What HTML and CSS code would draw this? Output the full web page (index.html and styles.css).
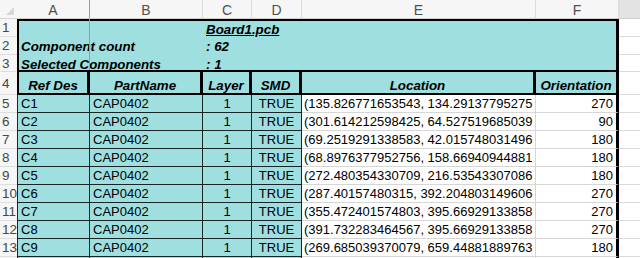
FILE: index.html
```html
<!DOCTYPE html>
<html>
<head>
<meta charset="utf-8">
<link rel="stylesheet" href="styles.css">
</head>
<body>
<div class="sheet">
  <div class="block"></div>
  <div class="resize-line"></div>
  <div class="tt title">Board1.pcb</div>
  <div class="tt lbl r2">Component count</div>
  <div class="tt val r2">: 62</div>
  <div class="tt lbl r3">Selected Components</div>
  <div class="tt val r3">: 1</div>

  <div class="corner"><svg width="17" height="19" viewBox="0 0 17 19"><polygon points="14,7 14,15 6,15" fill="#d6d6d6"/></svg></div>
  <div class="ch sep">A</div><div class="ch">B</div><div class="ch">C</div><div class="ch">D</div><div class="ch">E</div><div class="ch">F</div><div class="ch g"></div>

  <div class="rh">1</div><div class="gc"></div>
  <div class="rh">2</div><div class="gc"></div>
  <div class="rh">3</div><div class="gc"></div>

  <div class="rh">4</div>
  <div class="hd first">Ref Des</div><div class="hd">PartName</div><div class="hd">Layer</div><div class="hd">SMD</div><div class="hd">Location</div><div class="hd">Orientation</div><div class="gc"></div>

  <div class="rh">5</div><div class="c a">C1</div><div class="c">CAP0402</div><div class="c ctr">1</div><div class="c ctr">TRUE</div><div class="e">(135.826771653543, 134.29137795275</div><div class="f">270</div><div class="gc"></div>
  <div class="rh">6</div><div class="c a">C2</div><div class="c">CAP0402</div><div class="c ctr">1</div><div class="c ctr">TRUE</div><div class="e">(301.614212598425, 64.527519685039</div><div class="f">90</div><div class="gc"></div>
  <div class="rh">7</div><div class="c a">C3</div><div class="c">CAP0402</div><div class="c ctr">1</div><div class="c ctr">TRUE</div><div class="e">(69.2519291338583, 42.015748031496</div><div class="f">180</div><div class="gc"></div>
  <div class="rh">8</div><div class="c a">C4</div><div class="c">CAP0402</div><div class="c ctr">1</div><div class="c ctr">TRUE</div><div class="e">(68.8976377952756, 158.66940944881</div><div class="f">180</div><div class="gc"></div>
  <div class="rh">9</div><div class="c a">C5</div><div class="c">CAP0402</div><div class="c ctr">1</div><div class="c ctr">TRUE</div><div class="e">(272.480354330709, 216.53543307086</div><div class="f">180</div><div class="gc"></div>
  <div class="rh">10</div><div class="c a">C6</div><div class="c">CAP0402</div><div class="c ctr">1</div><div class="c ctr">TRUE</div><div class="e">(287.40157480315, 392.204803149606</div><div class="f">270</div><div class="gc"></div>
  <div class="rh">11</div><div class="c a">C7</div><div class="c">CAP0402</div><div class="c ctr">1</div><div class="c ctr">TRUE</div><div class="e">(355.472401574803, 395.66929133858</div><div class="f">270</div><div class="gc"></div>
  <div class="rh">12</div><div class="c a">C8</div><div class="c">CAP0402</div><div class="c ctr">1</div><div class="c ctr">TRUE</div><div class="e">(391.732283464567, 395.66929133858</div><div class="f">270</div><div class="gc"></div>
  <div class="rh">13</div><div class="c a">C9</div><div class="c">CAP0402</div><div class="c ctr">1</div><div class="c ctr">TRUE</div><div class="e">(269.685039370079, 659.44881889763</div><div class="f">180</div><div class="gc"></div>
  <div class="rh"></div><div class="c a"></div><div class="c"></div><div class="c"></div><div class="c"></div><div class="e"></div><div class="f"></div><div class="gc"></div>
</div>
</body>
</html>
```

FILE: styles.css
```css
html, body {
  margin: 0;
  padding: 0;
  background: #ffffff;
  overflow: hidden;
}

.sheet {
  display: grid;
  grid-template-columns: 17px 73px 113px 49px 50px 234px 83px 1fr;
  grid-template-rows: 19px 18px 18px 17px 23px repeat(10, 18px);
  font-family: "Liberation Sans", Arial, sans-serif;
  color: #000;
  width: 640px;
  height: 258px;
  overflow: hidden;
}

.sheet > div {
  box-sizing: border-box;
  min-width: 0;
  overflow: hidden;
  white-space: nowrap;
}

/* title block spanning A1:F3 */
.block {
  grid-row: 2 / 5;
  grid-column: 2 / 8;
  background: #9fdfe0;
  border-top: 2px solid #000;
  border-left: 2px solid #000;
  border-bottom: 2px solid #000;
  border-right: 3px solid #000;
}

.resize-line {
  grid-row: 2 / 5;
  grid-column: 2;
  justify-self: end;
  width: 1px;
  background: #9a9a9a;
  z-index: 2;
  margin-bottom: 2px;
}

.tt {
  display: flex;
  align-items: center;
  font-size: 13.33px;
  font-weight: bold;
  font-style: italic;
  z-index: 1;
}

.title {
  grid-row: 2;
  grid-column: 4 / 8;
  padding-left: 3px;
  padding-top: 2px;
  text-decoration: underline;
}

.lbl {
  grid-column: 2 / 4;
  padding-left: 4px;
}

.val {
  grid-column: 4 / 6;
  padding-left: 3px;
}

.r2 { grid-row: 3; padding-top: 1px; }
.r3 { grid-row: 4; padding-top: 2px; }

/* headers */
.corner {
  background: #f6f6f6;
  border-bottom: 1px solid #d4d4d4;
}

.corner svg { display: block; }

.ch {
  background: #f6f6f6;
  border-right: 1px solid #dcdcdc;
  border-bottom: 1px solid #cfcfcf;
  display: flex;
  align-items: center;
  justify-content: center;
  font-size: 14px;
  color: #505050;
  padding-top: 1px;
}

.ch.sep {
  border-right-color: #9a9a9a;
}

.ch.g {
  background: #e3e3e3;
  border-right: none;
}

.rh {
  background: #f6f6f6;
  border-bottom: 1px solid #dedede;
  display: flex;
  align-items: center;
  padding-left: 2px;
  font-size: 13.5px;
  color: #474747;
}

.gc {
  background: #fff;
  border-bottom: 1px solid #dadada;
}

/* column header row 4 */
.hd {
  background: #9fdfe0;
  border-right: 3px solid #000;
  border-bottom: 2px solid #000;
  display: flex;
  align-items: flex-end;
  justify-content: center;
  font-size: 13.33px;
  line-height: 15px;
  font-weight: bold;
  font-style: italic;
}

.hd.first {
  border-left: 2px solid #000;
}

/* data cells */
.c {
  background: #9fdfe0;
  border-right: 1px solid #1a2626;
  border-bottom: 1px solid #1a2626;
  display: flex;
  align-items: center;
  padding-left: 3px;
  font-size: 13px;
  line-height: 15px;
}

.c.a {
  border-left: 1px solid #1a2626;
  padding-left: 3px;
}

.c.ctr {
  justify-content: center;
  padding-left: 0;
}

.e {
  background: #fff;
  border-right: 1px solid #d6d6d6;
  border-bottom: 1px solid #d6d6d6;
  display: flex;
  align-items: center;
  padding-left: 2px;
  font-size: 13px;
  line-height: 15px;
}

.f {
  background: #fff;
  border-right: 3px solid #000;
  border-bottom: 1px solid #d6d6d6;
  display: flex;
  align-items: center;
  justify-content: flex-end;
  padding-right: 3px;
  font-size: 13px;
  line-height: 15px;
}
```
